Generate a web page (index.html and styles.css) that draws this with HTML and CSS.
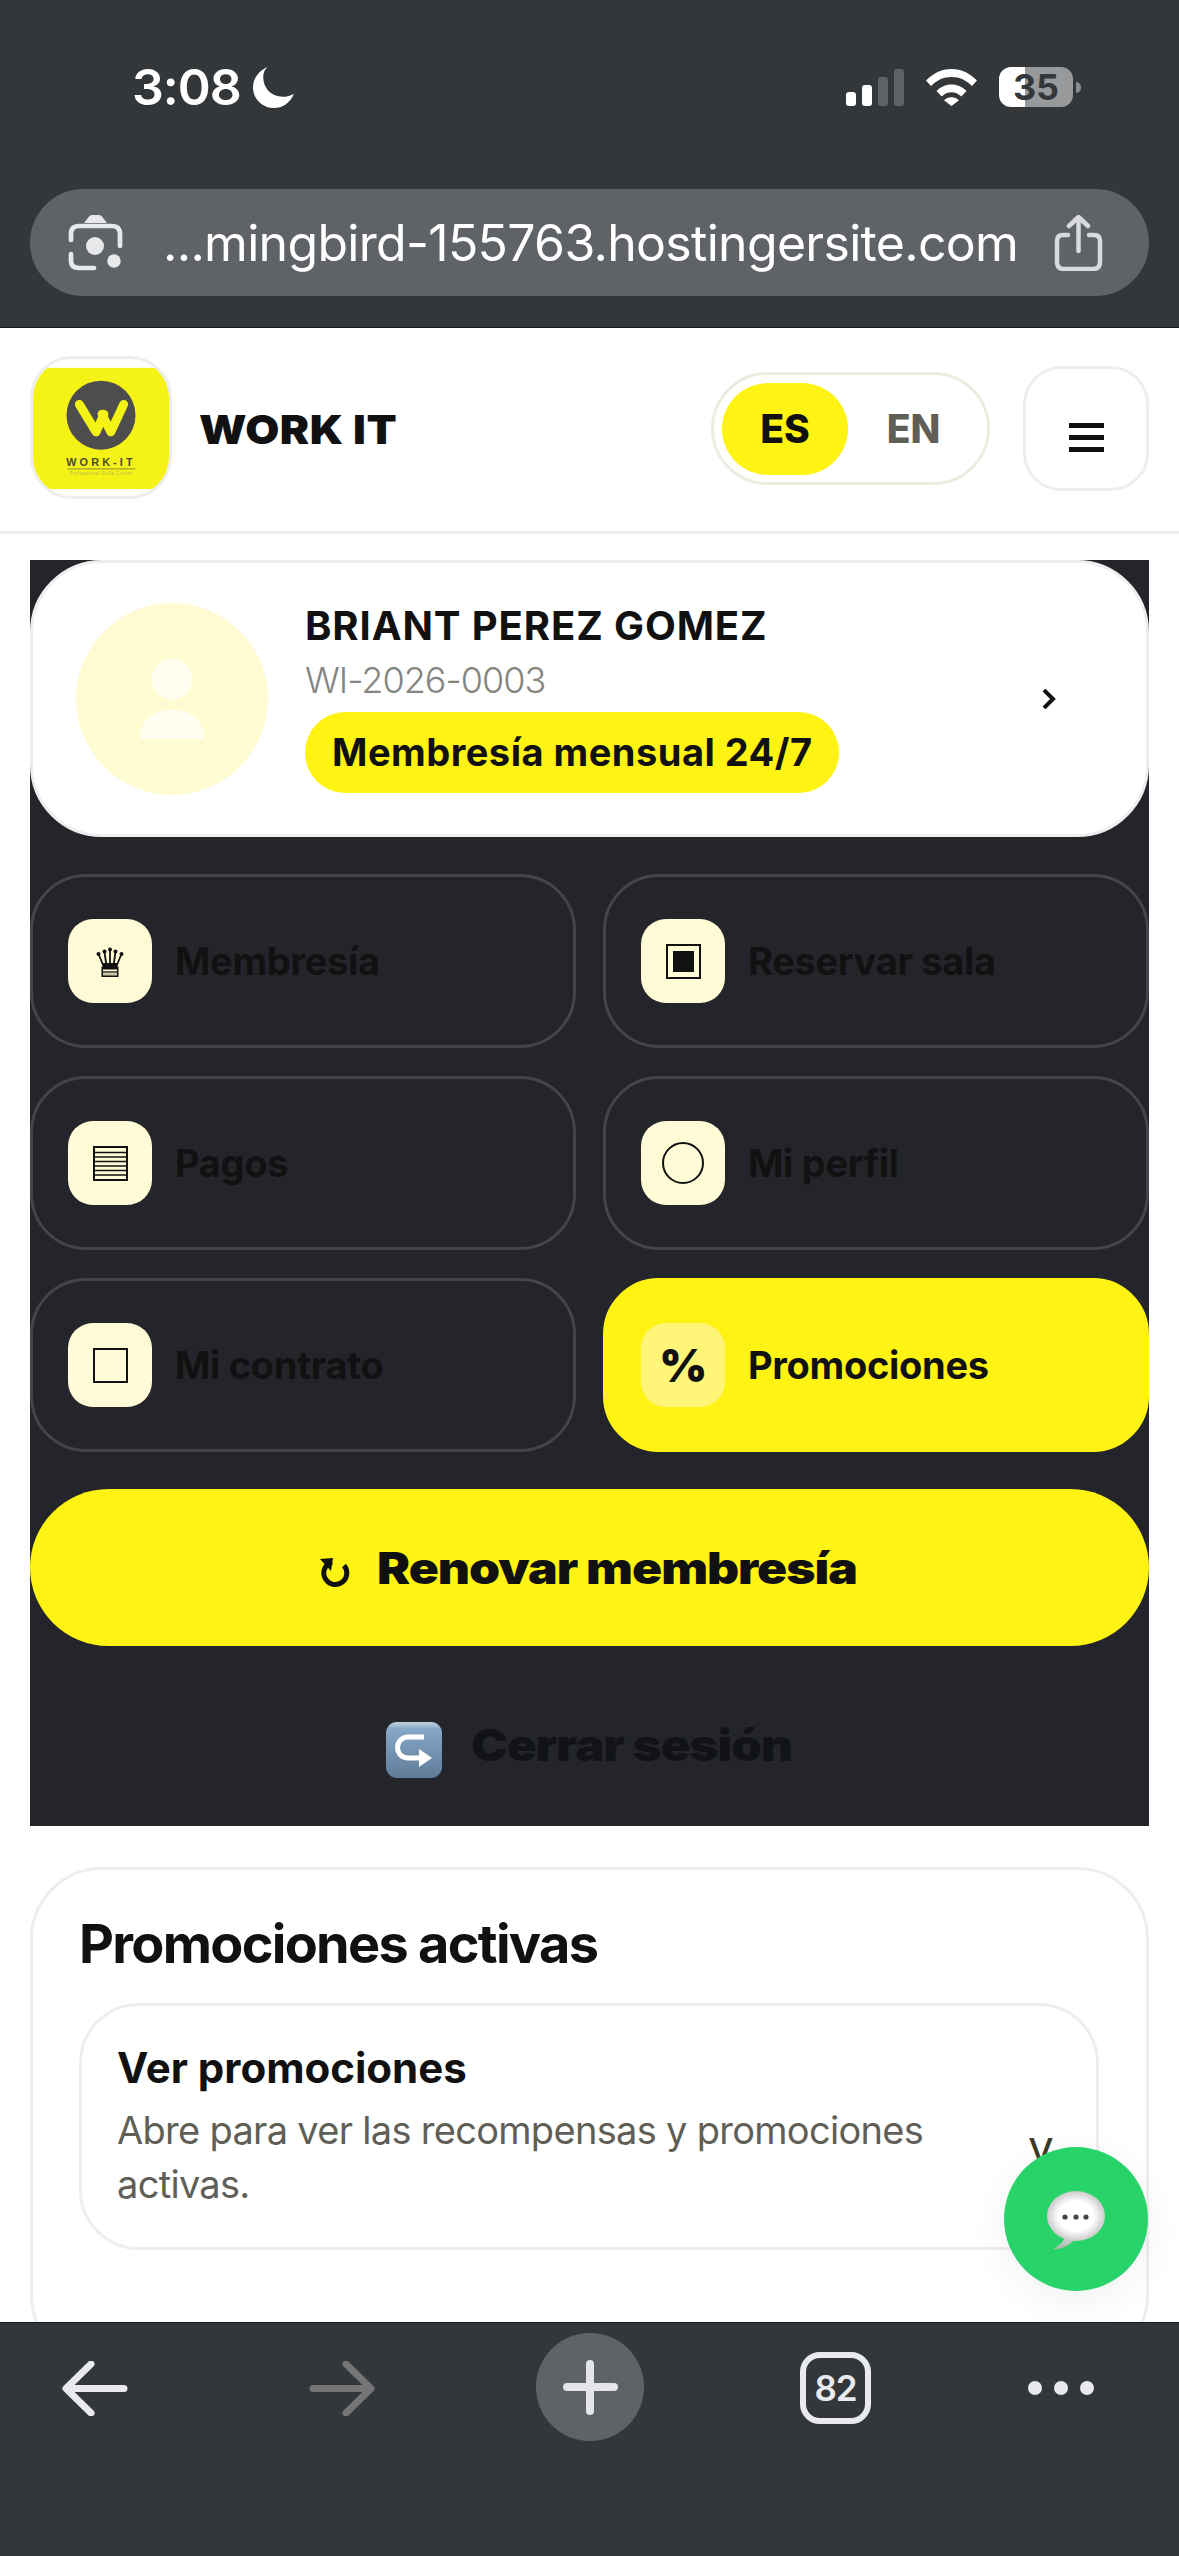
FILE: index.html
```html
<!DOCTYPE html>
<html lang="es">
<head>
<meta charset="utf-8">
<title>WORK IT</title>
<link rel="stylesheet" href="styles.css">
</head>
<body>
<div class="phone">
  <div class="chrome-top">
    <div class="status">
      <div class="clock"><span>3:08</span>
        <svg class="moon" viewBox="0 0 40 40"><path d="M14 0C5 4 0 12 0 20c0 11 9 20 20 20 9 0 16-5 20-14-3 2-7 3-11 3C18 29 10 21 10 10c0-4 1-7 4-10z" fill="#fff"/></svg>
      </div>
      <div class="status-right">
        <div class="signal"><i class="b1"></i><i class="b2"></i><i class="b3"></i><i class="b4"></i></div>
        <svg class="wifi" viewBox="0 0 51 37"><path d="M0 11.5C7 4.300 15.600 0 25.500 0S44 4.300 51 11.500l-5 5.500C40.500 11.300 33.500 8 25.500 8S10.500 11.300 5 17z M10.500 22C14.500 18 19.500 15.500 25.500 15.500S36.500 18 40.500 22l-5.200 5.500C32.500 24.800 29.200 23.300 25.500 23.300S18.500 24.800 15.700 27.500z M18 31.200C20 29.300 22.500 28.300 25.500 28.300S31 29.300 33 31.200L25.500 37z" fill="#fff"/></svg>
        <div class="battery"><span>35</span></div><i class="nub"></i>
      </div>
    </div>
    <div class="urlbar">
      <svg class="lens" viewBox="0 0 55 56" fill="none" stroke="#e6e8ea" stroke-width="4.700" stroke-linecap="round"><path d="M16 8L21 1.500Q22 0 24 0H31Q33 0 34 1.500L39 8Z" fill="#e6e8ea" stroke="none"/><path d="M3 25V19Q3 11 11 11H44Q52 11 52 19V31"/><path d="M3 39V46Q3 53 11 53H26"/><circle cx="27" cy="31" r="9" fill="#e6e8ea" stroke="none"/><circle cx="46" cy="46" r="6.700" fill="#e6e8ea" stroke="none"/></svg>
      <span class="url">...mingbird-155763.hostingersite.com</span>
      <svg class="share" viewBox="0 0 49 56" fill="none" stroke="#d8dadd" stroke-width="4.500" stroke-linecap="round" stroke-linejoin="round"><path d="M14 20H9q-6 0-6 6v21q0 7 7 7h29q7 0 7-7V26q0-6-6-6h-5"/><path d="M24.500 36V3M15 11l9.500-9L34 11"/></svg>
    </div>
  </div>

  <header class="site-head">
    <div class="logo">
      <svg class="logo-art" viewBox="0 0 138 123">
        <rect width="138" height="123" fill="#f5f316"/>
        <circle cx="69" cy="48" r="35" fill="#4d4d4d"/>
        <path d="M47 37l17 28 8-18M92 37L79 65 70 47" fill="none" stroke="#f5f316" stroke-width="9" stroke-linecap="round" stroke-linejoin="round"/>
        <text x="69" y="100" class="logo-name">WORK-IT</text>
        <rect x="35" y="102" width="69" height="1" fill="#8a8a30"/>
        <text x="69" y="109" class="logo-sub">Professional Skills Center</text>
      </svg>
    </div>
    <div class="brand">WORK IT</div>
    <div class="lang"><span class="lang-on">ES</span><span class="lang-off">EN</span></div>
    <div class="burger"><i></i><i></i><i></i></div>
  </header>

  <main class="content">
    <section class="panel">
      <div class="profile">
        <div class="avatar">
          <svg viewBox="0 0 64 80" class="person"><ellipse cx="32" cy="20" rx="20" ry="20.500" fill="#fffef0"/><path d="M0 80C0 60 14 51 32 51s32 9 32 29z" fill="#fffef0"/></svg>
        </div>
        <div class="who">
          <div class="who-name">BRIANT PEREZ GOMEZ</div>
          <div class="who-id">WI-2026-0003</div>
          <div class="who-plan">Membresía mensual 24/7</div>
        </div>
        <svg class="chev" viewBox="0 0 14 20"><path d="M2 1l9 9-9 9" fill="none" stroke="#111" stroke-width="4"/></svg>
      </div>

      <div class="grid">
        <div class="tile">
          <div class="tile-ic"><svg class="crown" viewBox="0 0 28 30"><g fill="none" stroke="#111" stroke-width="1.800"><path d="M14 3v16M8.500 5l2 14M19.500 5l-2 14M2.500 7l5 12M25.500 7l-5 12"/></g><g fill="#111"><circle cx="14" cy="2.500" r="2"/><circle cx="8.500" cy="4.500" r="2"/><circle cx="19.500" cy="4.500" r="2"/><circle cx="2.500" cy="7" r="2"/><circle cx="25.500" cy="7" r="2"/><path d="M6 16h16l-1 4H7z"/><rect x="5.500" y="19.500" width="17" height="10.500"/></g><rect x="7" y="22.500" width="14" height="1.800" fill="#fffbd6"/><rect x="7" y="25.500" width="14" height="3" fill="#c9c5a8"/></svg></div>
          <span>Membresía</span>
        </div>
        <div class="tile">
          <div class="tile-ic"><svg class="sq" viewBox="0 0 35 35"><rect x="1" y="1" width="33" height="33" fill="none" stroke="#111" stroke-width="2"/><rect x="7" y="7" width="21" height="21" fill="#111"/></svg></div>
          <span>Reservar sala</span>
        </div>
        <div class="tile">
          <div class="tile-ic"><svg class="sq" viewBox="0 0 35 35"><rect x="1" y="1" width="33" height="33" fill="none" stroke="#111" stroke-width="2"/><path d="M1 6.500h33M1 11h33M1 15.500h33M1 20h33M1 24.500h33M1 29h33" stroke="#111" stroke-width="1.500"/></svg></div>
          <span>Pagos</span>
        </div>
        <div class="tile">
          <div class="tile-ic"><svg class="circ" viewBox="0 0 42 42"><circle cx="21" cy="21" r="20" fill="none" stroke="#111" stroke-width="2"/></svg></div>
          <span>Mi perfil</span>
        </div>
        <div class="tile">
          <div class="tile-ic"><svg class="sq" viewBox="0 0 35 35"><rect x="1" y="1" width="33" height="33" fill="none" stroke="#111" stroke-width="2"/></svg></div>
          <span>Mi contrato</span>
        </div>
        <div class="tile tile-on">
          <div class="tile-ic"><span class="pct">%</span></div>
          <span>Promociones</span>
        </div>
      </div>

      <div class="renew">
        <svg class="loop" viewBox="0 0 30 30" fill="none" stroke="#111" stroke-width="5"><path d="M12 4A11.500 11.500 0 1 0 24 7.500"/><path d="M0 1L13 0 11 13z" fill="#111" stroke="none"/></svg>
        <span class="wide renew-text">Renovar membresía</span>
      </div>

      <div class="logout">
        <svg class="keycap" viewBox="0 0 56 56"><defs><linearGradient id="kc" x1="0" y1="0" x2="0" y2="1"><stop offset="0" stop-color="#c3d3e0"/><stop offset=".12" stop-color="#87a8c8"/><stop offset="1" stop-color="#5f7b98"/></linearGradient></defs><rect width="56" height="56" rx="11" fill="url(#kc)"/><path d="M38 15H22a10.500 10.500 0 0 0 0 21h12" fill="none" stroke="#fff" stroke-width="5"/><path d="M33 27l13 9-13 9z" fill="#fff"/></svg>
        <span class="wide logout-text">Cerrar sesión</span>
      </div>
    </section>

    <section class="promos">
      <h2>Promociones activas</h2>
      <div class="promo-box">
        <div class="promo-text">
          <h3>Ver promociones</h3>
          <p>Abre para ver las recompensas y promociones activas.</p>
        </div>
        <span class="promo-v">v</span>
      </div>
    </section>
  </main>

  <div class="fab">
    <svg class="bubble" viewBox="0 0 60 60"><defs><radialGradient id="bb" cx=".5" cy=".5" r=".55"><stop offset=".55" stop-color="#fff"/><stop offset="1" stop-color="#bdbdbd"/></radialGradient><linearGradient id="bt" x1="0" y1="0" x2="0" y2="1"><stop offset="0" stop-color="#e2e2e2"/><stop offset="1" stop-color="#a9b5ab"/></linearGradient></defs><path d="M20 42c0 6-6 13-13 16 7 1 16-3 22-10z" fill="url(#bt)"/><ellipse cx="30" cy="25" rx="29" ry="25" fill="url(#bb)"/><g fill="#444"><circle cx="19" cy="26" r="2.600"/><circle cx="30" cy="26" r="2.600"/><circle cx="40" cy="26" r="2.600"/></g></svg>
  </div>

  <nav class="chrome-bottom">
    <svg class="nav-ic" viewBox="0 0 66 55" fill="none" stroke="#e8eaed" stroke-width="7" stroke-linecap="round" stroke-linejoin="round"><path d="M62 27.500H5M29 3L4 27.500 29 52"/></svg>
    <svg class="nav-ic dim" viewBox="0 0 66 55" fill="none" stroke="#737577" stroke-width="7" stroke-linecap="round" stroke-linejoin="round"><path d="M4 27.500h57M37 3l25 24.500L37 52"/></svg>
    <div class="plus"><i class="ph"></i><i class="pv"></i></div>
    <div class="tabs">82</div>
    <div class="dots"><i></i><i></i><i></i></div>
  </nav>
</div>
</body>
</html>
```
FILE: styles.css
```css
* { box-sizing: border-box; }
html, body { margin: 0; padding: 0; background: #fff; }
body { font-family: Inter, "Noto Sans", "Liberation Sans", sans-serif; color: #111; }
.phone { position: relative; width: 1179px; height: 2556px; overflow: hidden; background: #fff; }

/* top chrome */
.chrome-top { height: 328px; background: #34373a; border-bottom: 1px solid #16181a; padding: 0 30px; }
.status { height: 189px; padding: 62px 0 0 102px; display: flex; justify-content: space-between; align-items: flex-start; }
.clock { display: flex; align-items: center; gap: 12px; color: #fff; font-size: 50px; font-weight: 600; line-height: 50px; letter-spacing: -1px; }
.moon { width: 41px; height: 41px; }
.status-right { display: flex; align-items: center; padding: 5px 68px 0 0; height: 45px; }
.signal { display: flex; align-items: flex-end; gap: 6px; height: 37px; margin-right: 22px; }
.signal i { display: block; width: 10px; border-radius: 3px; background: #5f6367; }
.signal .b1 { height: 14px; background: #fff; }
.signal .b2 { height: 21px; background: #fff; }
.signal .b3 { height: 29px; }
.signal .b4 { height: 37px; }
.wifi { width: 51px; height: 37px; margin-right: 22px; }
.battery { width: 74px; height: 40px; border-radius: 12px; background: linear-gradient(90deg, #fff 26px, #98999b 26px); display: flex; align-items: center; justify-content: center; color: #34373a; font-size: 36px; font-weight: 700; line-height: 1; }
.nub { display: block; width: 5px; height: 11px; margin-left: 3px; border-radius: 0 6px 6px 0; background: #8a8c8e; }
.urlbar { height: 107px; border-radius: 54px; background: #5f6367; display: flex; align-items: center; padding: 0 46px 0 38px; }
.lens { width: 55px; height: 56px; flex: none; overflow: visible; }
.url { flex: 1; margin-left: 40px; color: #fff; font-size: 50px; font-weight: 400; white-space: nowrap; letter-spacing: -0.7px; }
.share { width: 49px; height: 56px; flex: none; }

/* site header */
.site-head { height: 206px; border-bottom: 3px solid #eee; padding: 28px 30px 0; display: flex; align-items: flex-start; }
.logo { width: 142px; height: 143px; border: 3px solid #eee; border-radius: 42px; padding: 8px 0; flex: none; overflow: hidden; }
.logo-art { display: block; width: 136px; height: 123px; }
.logo-name { font-family: "Liberation Sans", sans-serif; font-size: 11px; font-weight: 700; fill: #4a4a30; text-anchor: middle; letter-spacing: 3.200px; }
.logo-sub { font-family: "Liberation Sans", sans-serif; font-size: 4.500px; fill: #b4b450; text-anchor: middle; letter-spacing: .5px; }
.brand { margin: 50px 0 0 27px; font-size: 40px; font-weight: 900; line-height: 48px; letter-spacing: .5px; color: #111; flex: 1; transform: scaleX(1.1); transform-origin: left center; }
.lang { width: 279px; height: 113px; margin-top: 16px; border: 3px solid #ecece0; border-radius: 57px; padding: 8px; display: flex; align-items: center; }
.lang-on, .lang-off { display: flex; align-items: center; justify-content: center; font-size: 39px; font-weight: 800; height: 92px; }
.lang-on { width: 126px; background: #fff314; border-radius: 46px; color: #111; }
.lang-off { flex: 1; color: #5f5f58; }
.burger { width: 126px; height: 125px; margin: 10px 0 0 33px; border: 3px solid #eee; border-radius: 38px; display: flex; flex-direction: column; align-items: center; justify-content: center; gap: 7px; padding-top: 18px; flex: none; }
.burger i { display: block; width: 35px; height: 5px; background: #111; }

/* panel */
.content { padding: 26px 30px 0; display: flex; flex-direction: column; gap: 41px; }
.panel { background: #24252a; height: 1266px; display: flex; flex-direction: column; }
.profile { height: 277px; background: #fff; border: 3px solid #eee; border-radius: 72px; display: flex; align-items: center; padding: 0 45px 0 43px; }
.avatar { width: 192px; height: 192px; border-radius: 50%; background: #fffcd4; display: flex; align-items: center; justify-content: center; flex: none; }
.person { width: 64px; height: 80px; }
.who { flex: 1; margin-left: 37px; display: flex; flex-direction: column; align-items: flex-start; padding-bottom: 2px; }
.who-name { font-size: 40px; font-weight: 700; line-height: 46px; letter-spacing: .9px; color: #111; }
.who-id { font-size: 36px; font-weight: 300; line-height: 46px; color: #85857f; margin-top: 8px; letter-spacing: -1px; }
.who-plan { margin-top: 9px; height: 81px; padding: 0 26px 0 27px; border-radius: 41px; background: #fff314; display: flex; align-items: center; font-size: 38px; font-weight: 700; letter-spacing: .5px; color: #111; }
.chev { width: 14px; height: 20px; flex: none; margin-right: 45px; }

.grid { display: grid; grid-template-columns: 546px 546px; column-gap: 27px; row-gap: 28px; margin-top: 37px; }
.tile { height: 174px; border: 3px solid #44454a; border-radius: 56px; display: flex; align-items: center; gap: 23px; padding-left: 35px; font-size: 38px; font-weight: 700; color: #111; letter-spacing: -.3px; }
.tile-ic { width: 84px; height: 84px; border-radius: 25px; background: #fffbd6; display: flex; align-items: center; justify-content: center; flex: none; }
.tile-on { background: #fff314; border-color: #fff314; }
.tile-on .tile-ic { background: #fff679; }
.pct { font-size: 46px; font-weight: 900; color: #111; }
.crown { width: 28px; height: 30px; margin-top: 2px; }
.sq { width: 35px; height: 35px; }
.circ { width: 42px; height: 42px; }

.wide { display: block; white-space: nowrap; font-size: 44px; font-weight: 900; letter-spacing: -.9px; transform-origin: left center; }
.renew { height: 157px; margin-top: 37px; border-radius: 79px; background: #fff314; display: flex; align-items: center; justify-content: center; gap: 27px; color: #111; padding-right: 2px; }
.renew-text { width: 480px; transform: scaleX(1.13); }
.loop { width: 30px; height: 30px; margin-top: 11px; flex: none; }
.logout { display: flex; align-items: center; justify-content: center; gap: 29px; margin-top: 72px; color: #111316; padding-right: 2px; }
.logout-text { width: 320px; margin-bottom: 9px; transform: scaleX(1.12); }
.keycap { width: 56px; height: 56px; flex: none; }

/* promos */
.promos { height: 500px; border: 3px solid #eee; border-radius: 72px; padding: 44px 47px 0 46px; }
.promos h2 { margin: 0; font-size: 54px; font-weight: 700; line-height: 60px; letter-spacing: -1.7px; color: #111; }
.promo-box { height: 247px; margin-top: 29px; border: 3px solid #eee; border-radius: 60px; padding: 36px 35px 0; display: flex; align-items: flex-start; }
.promo-text { width: 810px; }
.promo-box h3 { margin: 0; font-size: 42px; font-weight: 700; line-height: 52px; letter-spacing: 0; color: #111; }
.promo-box p { margin: 9px 0 0; font-size: 38px; font-weight: 400; line-height: 54px; letter-spacing: -.7px; color: #5f5f58; }
.promo-v { margin: 82px 0 0 101px; font-size: 46px; line-height: 44px; color: #3d3a28; }

/* overlays */
.fab { position: absolute; left: 1004px; top: 2147px; width: 144px; height: 144px; border-radius: 50%; background: #28d46a; box-shadow: 0 10px 40px rgba(0,0,0,.06); display: flex; align-items: center; justify-content: center; }
.bubble { width: 60px; height: 60px; margin-top: 4px; }

.chrome-bottom { position: absolute; left: 0; top: 2322px; width: 1179px; height: 234px; background: #34373a; border-top: 1px solid #16181a; }
.nav-ic { position: absolute; top: 38px; left: 62px; width: 66px; height: 55px; }
.nav-ic.dim { left: 309px; }
.plus { position: absolute; left: 536px; top: 10px; width: 108px; height: 108px; border-radius: 50%; background: #5f6367; }
.plus i { position: absolute; background: #e3e5e8; border-radius: 4px; }
.ph { left: 27px; top: 50px; width: 55px; height: 8px; }
.pv { left: 50px; top: 27px; width: 8px; height: 55px; }
.tabs { position: absolute; left: 800px; top: 29px; width: 71px; height: 72px; border: 6px solid #e8eaed; border-radius: 20px; display: flex; align-items: center; justify-content: center; color: #e8eaed; font-size: 35px; font-weight: 600; letter-spacing: -1px; }
.dots { position: absolute; left: 1028px; top: 58px; display: flex; gap: 12px; }
.dots i { display: block; width: 14px; height: 14px; border-radius: 50%; background: #e8eaed; }
```
